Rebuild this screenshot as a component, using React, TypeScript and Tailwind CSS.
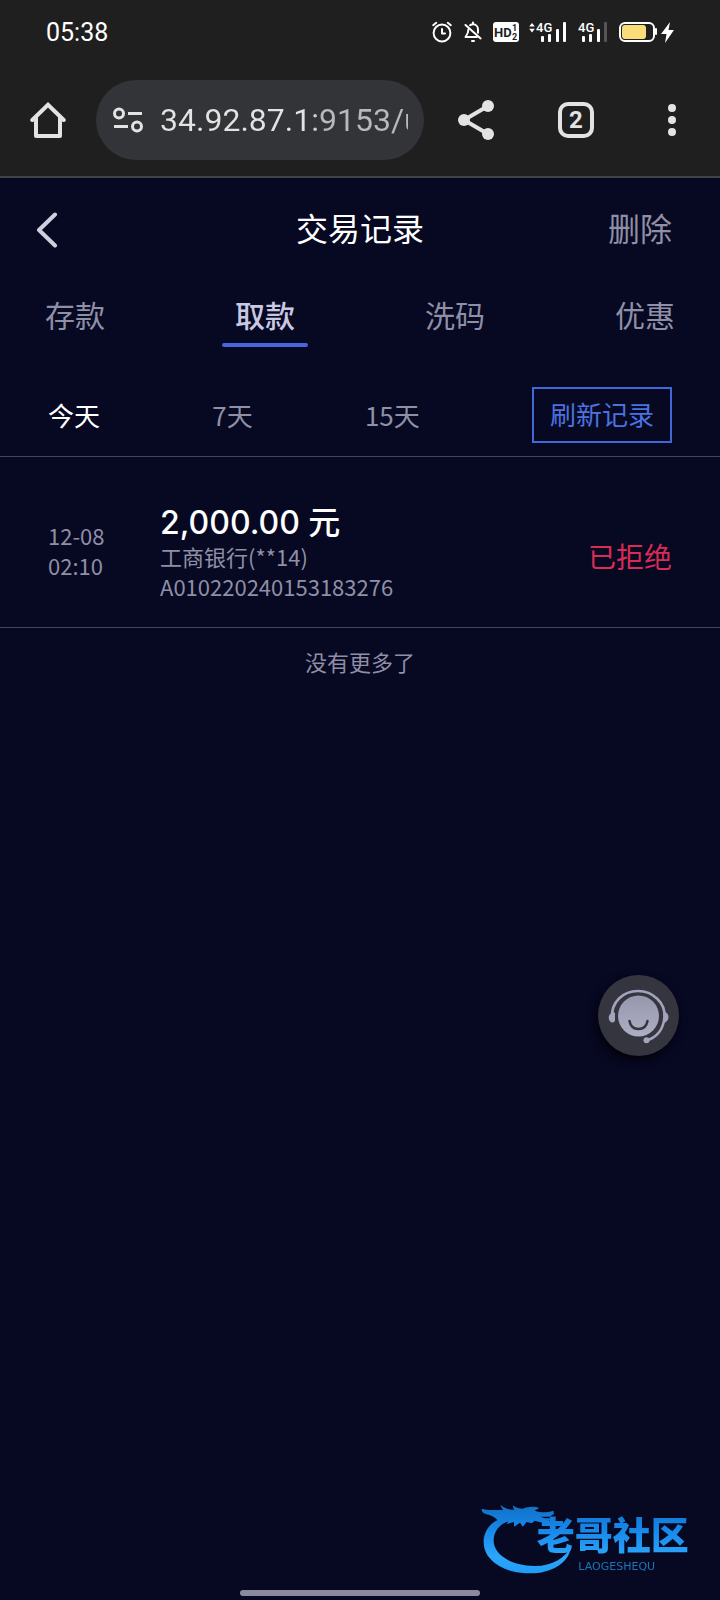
import { useState } from "react";

type TransactionRecord = {
  id: string;
  date: string;
  time: string;
  amount: string;
  bank: string;
  status: string;
};

const tabs = ["存款", "取款", "洗码", "优惠"];
const ranges = ["今天", "7天", "15天"];

const records: TransactionRecord[] = [
  {
    id: "A010220240153183276",
    date: "12-08",
    time: "02:10",
    amount: "2,000.00 元",
    bank: "工商银行(**14)",
    status: "已拒绝",
  },
];

function StatusBar() {
  return (
    <div className="flex h-16 items-center justify-between px-[46px] text-white">
      <span className="pt-0.5 font-['Roboto',sans-serif] text-[25px] leading-8">
        05:38
      </span>
      <div className="flex items-center gap-3">
        {/* alarm */}
        <svg
          viewBox="0 0 20 22"
          className="h-[22px] w-5"
          fill="none"
          stroke="currentColor"
          strokeWidth="2"
          strokeLinecap="round"
          strokeLinejoin="round"
        >
          <circle cx="10" cy="12" r="8.4" />
          <path d="M10 8V12.5H13M1.2 4.2 4.200 1.8M18.8 4.2 15.800 1.8" />
        </svg>
        {/* muted bell */}
        <svg
          viewBox="0 0 18 22"
          className="-mr-px h-[22px] w-[18px]"
          fill="none"
          stroke="currentColor"
          strokeWidth="2"
          strokeLinecap="round"
          strokeLinejoin="round"
        >
          <path d="M9 1.5V3.2M6 4.3C7 3.6 7.900 3.3 9 3.3c3 0 5 2.3 5 5.2v3.3M4.500 8.300c-.1 3.6-.600 4.6-3 7.7H13" />
          <path d="M1.5 4 16.6 17.4M8 20h2" />
        </svg>
        {/* HD voice on both sims */}
        <svg viewBox="0 0 26 20" className="-mr-0.5 h-5 w-[26px]">
          <rect width="26" height="20" rx="3" fill="currentColor" />
          <g
            fill="#1f1f1f"
            fontFamily="Roboto, sans-serif"
            fontWeight="700"
          >
            <text x="1" y="15" fontSize="13">
              HD
            </text>
            <text x="19" y="9" fontSize="9">
              1
            </text>
            <text x="19" y="18" fontSize="9">
              2
            </text>
          </g>
        </svg>
        {/* sim 1 signal */}
        <svg viewBox="0 0 37 22" className="h-[22px] w-[37px]" fill="currentColor">
          <path d="m3 2 2.800 3.600H.2ZM3 11.400 .2 7.800h5.600Z" />
          <text
            x="7"
            y="11"
            fontSize="13"
            fontWeight="500"
            fontFamily="Roboto, sans-serif"
          >
            4G
          </text>
          <rect x="12" y="15" width="3" height="6" rx="1" />
          <rect x="19" y="13" width="3" height="8" rx="1" />
          <rect x="27" y="8" width="3" height="13" rx="1" />
          <rect x="34" y="1" width="3" height="20" rx="1" />
        </svg>
        {/* sim 2 signal */}
        <svg viewBox="0 0 29 22" className="h-[22px] w-[29px]" fill="currentColor">
          <text
            x="0"
            y="11"
            fontSize="13"
            fontWeight="500"
            fontFamily="Roboto, sans-serif"
          >
            4G
          </text>
          <rect x="4" y="15" width="3" height="6" rx="1" />
          <rect x="11" y="13" width="3" height="8" rx="1" />
          <rect x="19" y="8" width="3" height="13" rx="1" />
          <rect x="26" y="1" width="3" height="20" rx="1" fill="#555555" />
        </svg>
        <div className="flex items-center gap-1">
          <svg viewBox="0 0 38 20" className="h-5 w-[38px]">
            <rect
              x="1"
              y="1"
              width="34"
              height="18"
              rx="5"
              fill="none"
              stroke="currentColor"
              strokeWidth="2"
            />
            <rect x="3" y="3" width="24" height="14" rx="3" fill="#fbdc78" />
            <rect x="36" y="6" width="2" height="7" rx="1" fill="currentColor" />
          </svg>
          <svg viewBox="0 0 13 21" className="h-[21px] w-[13px]">
            <path d="M9 0 0 12h5.500L4 21l9-13H7.500Z" fill="currentColor" />
          </svg>
        </div>
      </div>
    </div>
  );
}

function BrowserBar() {
  return (
    <div className="flex h-28 items-center text-[#e3e3e3]">
      <button type="button" aria-label="主页" className="flex w-24 justify-center">
        <svg
          viewBox="0 0 36 36"
          className="size-9"
          fill="none"
          stroke="currentColor"
          strokeWidth="4"
          strokeLinecap="round"
          strokeLinejoin="round"
        >
          <path d="M2.300 18 18 2.800 33.700 18" strokeLinejoin="miter" />
          <path d="M6 15V34H30V15" />
        </svg>
      </button>

      <div className="flex h-20 min-w-0 flex-1 items-center gap-[17px] rounded-full bg-[#333438] pr-4 pl-[17px]">
        <svg
          viewBox="0 0 30 26"
          className="h-[26px] w-[30px] shrink-0"
          fill="none"
          stroke="currentColor"
          strokeWidth="3"
        >
          <circle cx="6" cy="6.500" r="4.500" />
          <circle cx="24" cy="19.500" r="4.500" />
          <path d="M15 6.500H29M1 19.500H15" />
        </svg>
        <input
          type="text"
          readOnly
          aria-label="网址"
          value="34.92.87.1:9153/u"
          className="w-full min-w-0 bg-linear-to-r from-[#e3e3e3] from-60% to-[#b8b9bc] to-65% bg-clip-text font-['Roboto',sans-serif] text-[32px] leading-10 text-transparent outline-none"
        />
      </div>

      <button type="button" aria-label="分享" className="flex w-26 justify-center">
        <svg
          viewBox="0 0 36 40"
          className="h-10 w-9"
          fill="currentColor"
          stroke="currentColor"
        >
          <path d="M30 6 6 20 30 34" fill="none" strokeWidth="4" />
          <circle cx="30" cy="6" r="6" stroke="none" />
          <circle cx="6" cy="20" r="6" stroke="none" />
          <circle cx="30" cy="34" r="6" stroke="none" />
        </svg>
      </button>
      <button type="button" aria-label="标签页" className="flex w-24 justify-center">
        <span className="flex size-9 items-center justify-center rounded-[10px] border-4 border-[#e3e3e3] font-['Roboto',sans-serif] text-2xl leading-6 font-bold">
          2
        </span>
      </button>
      <button type="button" aria-label="更多" className="flex w-24 justify-center">
        <svg viewBox="0 0 8 32" className="h-8 w-2" fill="currentColor">
          <circle cx="4" cy="4" r="4" />
          <circle cx="4" cy="16" r="4" />
          <circle cx="4" cy="28" r="4" />
        </svg>
      </button>
    </div>
  );
}

function RecordRow({ record }: { record: TransactionRecord }) {
  return (
    <li className="flex items-center border-b border-[#43435c] px-12 pt-12 pb-[26px]">
      <div className="w-28 shrink-0 pb-1.5 text-[22px] leading-[30px] text-[#8f8fa6]">
        <p>{record.date}</p>
        <p>{record.time}</p>
      </div>
      <div className="min-w-0 flex-1 text-[22px] leading-[30px] text-[#8f8fa6]">
        <p className="font-['Inter','Noto_Sans_CJK_SC',sans-serif] text-[32px] leading-9 font-medium text-white">
          {record.amount}
        </p>
        <p>{record.bank}</p>
        <p>{record.id}</p>
      </div>
      <p className="pt-1.5 text-[28px] leading-10 text-[#d92b55]">
        {record.status}
      </p>
    </li>
  );
}

function SupportButton() {
  return (
    <button
      type="button"
      aria-label="在线客服"
      className="fixed right-[41px] bottom-[544px] rounded-full shadow-[-2px_4px_10px_rgba(0,0,0,0.8)]"
    >
      <svg viewBox="0 0 81 81" className="size-[81px]" fill="none">
        <defs>
          <linearGradient id="face" x1="0" y1="0" x2="0" y2="1">
            <stop offset="0" stopColor="#9797ae" />
            <stop offset="1" stopColor="#adadc4" />
          </linearGradient>
        </defs>
        <circle cx="40.500" cy="40.500" r="40.500" fill="#35353f" />
        <circle cx="40.500" cy="41" r="20.500" fill="url(#face)" />
        <path
          d="M31.500 46c1 5.500 4.500 8 9 8s8-2.500 9-8"
          stroke="#35353f"
          strokeWidth="2.500"
          strokeLinecap="round"
        />
        <path
          d="M14 43C13 27 25 16 40 16s27.500 12 26.500 26C65.500 54 59 63 48 65.500"
          stroke="#a3a3bb"
          strokeWidth="2.600"
        />
        <path
          d="M15.500 37c-3 1-4.800 3-4.800 5.600 0 2.900 1.500 5 3.800 5 1.500 0 2.500-1 2.500-2.500V38ZM66 36.500c3 1.300 4.500 3 4.500 5.500s-1.500 5-5.500 6.500Z"
          fill="#a3a3bb"
        />
        <circle cx="48.500" cy="65.300" r="3" fill="#a3a3bb" />
      </svg>
    </button>
  );
}

function CommunityLogo() {
  return (
    <svg
      viewBox="0 0 750 270"
      role="img"
      aria-label="老哥社区"
      className="pointer-events-none fixed right-0 bottom-5 h-[90px] w-[250px]"
    >
      <defs>
        <linearGradient
          id="logo"
          x1="0"
          y1="50"
          x2="0"
          y2="250"
          gradientUnits="userSpaceOnUse"
        >
          <stop offset="0" stopColor="#1272c8" />
          <stop offset="0.350" stopColor="#1688ea" />
          <stop offset="0.750" stopColor="#2ba6fb" />
          <stop offset="1" stopColor="#1f9cf5" />
        </linearGradient>
      </defs>
      <g fill="url(#logo)">
        <path d="M112 80C66 88 40 120 41 158c1 54 62 92 140 92 62 0 116-30 122-80-16 32-56 58-108 58-72 0-122-34-124-74-1-28 16-52 48-62l22-12Z" />
        <path d="M35 56c24 6 44 4 64 4L90 44c16 12 28 14 42 16l-4-14c12 8 20 10 30 10 16-6 36-8 50-2l-14 8c20 6 34 6 56 0l2 10-14 8-26 0c10 4 18 6 30 4l-6 12c-16 4-26 0-42-4l-8 8-16-4-12 14-8-12-18 12 0-14-22 6 6-12-28 4c-10-8-18-16-32-20-12-2-22-6-21-18Z" />
        <text
          x="200"
          y="176"
          fontSize="114"
          fontWeight="900"
          fontFamily="'Noto Sans CJK SC', sans-serif"
        >
          老哥社区
        </text>
        <text
          x="325"
          y="240"
          fontSize="33"
          fontFamily="'DejaVu Sans', sans-serif"
          opacity="0.700"
        >
          LAOGESHEQU
        </text>
      </g>
    </svg>
  );
}

export default function App() {
  const [activeTab, setActiveTab] = useState("取款");
  const [activeRange, setActiveRange] = useState("今天");

  return (
    <div className="min-h-screen bg-[#070822] font-['Noto_Sans_CJK_SC',sans-serif]">
      <div className="border-b-2 border-[#43444a] bg-[#1f1f1f]">
        <StatusBar />
        <BrowserBar />
      </div>

      <header className="grid h-[103px] grid-cols-[1fr_auto_1fr] items-center px-12 text-[32px] leading-10">
        <button
          type="button"
          aria-label="返回"
          className="-ml-3 w-6 justify-self-start text-[#cfcfde]"
        >
          <svg
            viewBox="0 0 24 36"
            className="h-9 w-6"
            fill="none"
            stroke="currentColor"
            strokeWidth="4"
            strokeLinecap="round"
            strokeLinejoin="round"
          >
            <path d="M19 2.500 3 18 19 33.500" />
          </svg>
        </button>
        <h1 className="pb-1.5 text-white">交易记录</h1>
        <button type="button" className="justify-self-end pb-1.5 text-[#8f8fa6]">
          删除
        </button>
      </header>

      <nav className="flex items-start justify-between px-8 pt-2">
        {tabs.map((tab) => (
          <button
            key={tab}
            type="button"
            aria-pressed={tab === activeTab}
            onClick={() => setActiveTab(tab)}
            className={`w-[86px] text-[30px] leading-[50px] ${
              tab === activeTab
                ? "font-medium text-[#c8c8e2]"
                : "text-[#8f8fa6]"
            }`}
          >
            {tab}
            <span
              className={`mt-1 block h-1 rounded-full ${
                tab === activeTab ? "bg-[#4765dc]" : "bg-transparent"
              }`}
            />
          </button>
        ))}
      </nav>

      <div className="flex items-center justify-between border-b border-[#43435c] px-12 pt-10 pb-[13px] text-[26px] leading-10">
        {ranges.map((range) => (
          <button
            key={range}
            type="button"
            aria-pressed={range === activeRange}
            onClick={() => setActiveRange(range)}
            className={range === activeRange ? "text-white" : "text-[#8f8fa6]"}
          >
            {range}
          </button>
        ))}
        <button
          type="button"
          className="h-14 w-[140px] border-2 border-[#4068d8] pb-0.5 text-[#4c72e0]"
        >
          刷新记录
        </button>
      </div>

      <main>
        <ul>
          {records.map((record) => (
            <RecordRow key={record.id} record={record} />
          ))}
        </ul>
        <p className="text-center text-[22px] leading-[66px] text-[#8f8fa6]">
          没有更多了
        </p>
      </main>

      <SupportButton />
      <CommunityLogo />
      <div className="fixed inset-x-0 bottom-1 flex justify-center">
        <div className="h-1.5 w-1/3 rounded-full bg-[#8a8a9c]" />
      </div>
    </div>
  );
}
